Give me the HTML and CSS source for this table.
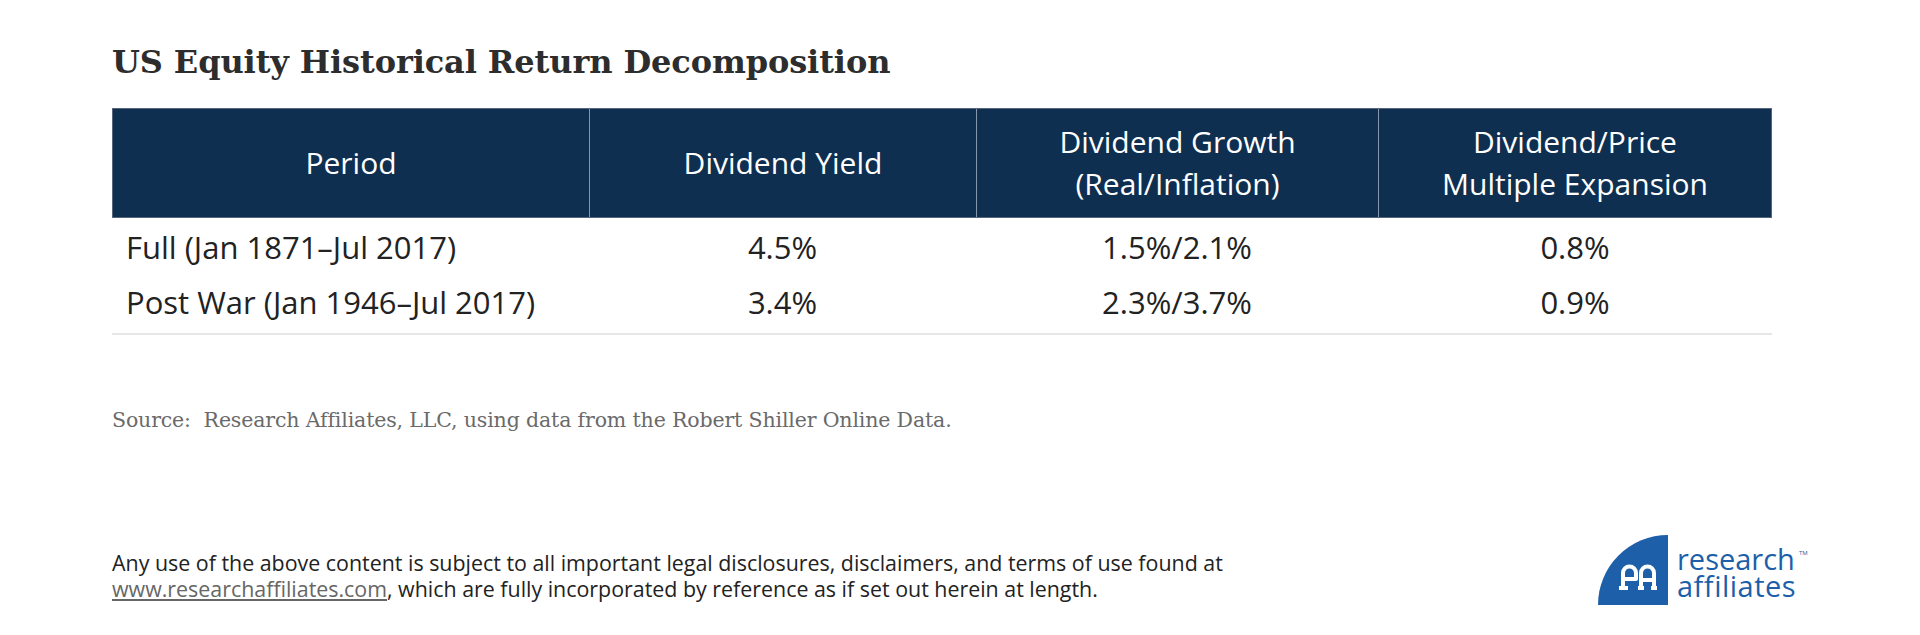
FILE: index.html
```html
<!DOCTYPE html>
<html lang="en">
<head>
<meta charset="utf-8">
<title>US Equity Historical Return Decomposition</title>
<link rel="stylesheet" href="styles.css">
</head>
<body>
<main class="page">
  <h1 class="title">US Equity Historical Return Decomposition</h1>
  <div class="table" role="table">
    <div class="thead" role="row">
      <div class="th" role="columnheader">Period</div>
      <div class="th" role="columnheader">Dividend Yield</div>
      <div class="th" role="columnheader">Dividend Growth<br>(Real/Inflation)</div>
      <div class="th" role="columnheader">Dividend/Price<br>Multiple Expansion</div>
    </div>
    <div class="tbody">
      <div class="tr" role="row">
        <div class="td first" role="cell">Full (Jan 1871–Jul 2017)</div>
        <div class="td" role="cell">4.5%</div>
        <div class="td" role="cell">1.5%/2.1%</div>
        <div class="td" role="cell">0.8%</div>
      </div>
      <div class="tr" role="row">
        <div class="td first" role="cell">Post War (Jan 1946–Jul 2017)</div>
        <div class="td" role="cell">3.4%</div>
        <div class="td" role="cell">2.3%/3.7%</div>
        <div class="td" role="cell">0.9%</div>
      </div>
    </div>
  </div>
  <p class="source">Source:&nbsp; Research Affiliates, LLC, using data from the Robert Shiller Online Data.</p>
</main>
<footer class="footer">
  <p class="disclaimer">Any use of the above content is subject to all important legal disclosures, disclaimers, and terms of use found at<br><a class="link" href="#">www.researchaffiliates.com</a>, which are fully incorporated by reference as if set out herein at length.</p>
  <div class="logo" aria-label="research affiliates">
    <svg class="logo-mark" width="70" height="72" viewBox="0 0 70 72" aria-hidden="true">
      <path d="M0 71 A70 70 0 0 1 70 1 L70 71 Z" fill="#1d5fa9"/>
      <g fill="none" stroke="#fff" stroke-width="4" stroke-linejoin="round">
        <path d="M25 54 L25 39 A6.5 6.5 0 0 1 38 39 L38 45 L27 45"/>
        <path d="M21 54 L30 54"/>
        <path d="M43 54 L43 39 A6.5 6.5 0 0 1 56 39 L56 54"/>
        <path d="M43 46 L56 46"/>
        <path d="M40 54 L46 54 M53 54 L59 54"/>
      </g>
    </svg>
    <div class="logo-words">
      <span class="logo-line">research<span class="tm">TM</span></span>
      <span class="logo-line wide">affiliates</span>
    </div>
  </div>
</footer>
</body>
</html>
```
FILE: styles.css
```css
html, body {
  margin: 0;
  padding: 0;
  background: #ffffff;
}

.page {
  padding: 0 112px;
}

.title {
  margin: 0;
  padding-top: 42px;
  font-family: "DejaVu Serif", "Liberation Serif", serif;
  font-weight: 700;
  font-size: 32px;
  line-height: 40px;
  letter-spacing: -0.1px;
  color: #2d2d2d;
}

.table {
  width: 1660px;
  margin-top: 26px;
  font-family: "Open Sans", "Noto Sans", sans-serif;
}

.thead {
  display: grid;
  grid-template-columns: 476px 387px 402px 393px;
  height: 110px;
  box-sizing: border-box;
  background: #0f2f51;
  border: 1px solid #56657d;
}

.th {
  display: flex;
  align-items: center;
  justify-content: center;
  text-align: center;
  color: #ffffff;
  font-size: 30px;
  line-height: 42px;
  font-weight: 400;
}

.th + .th {
  border-left: 1px solid #8796af;
}

.tbody {
  padding: 2px 0 3px;
  border-bottom: 2px solid #e6e6e6;
}

.tr {
  display: grid;
  grid-template-columns: 477px 387px 402px 394px;
  height: 55px;
}

.td {
  font-size: 31px;
  line-height: 55px;
  color: #222222;
  text-align: center;
}

.td.first {
  text-align: left;
  padding-left: 14px;
}

.source {
  margin: 71px 0 0;
  font-family: "DejaVu Serif", "Liberation Serif", serif;
  font-size: 20.5px;
  line-height: 28px;
  letter-spacing: -0.15px;
  color: #6a6a6a;
}

.footer {
  display: flex;
  justify-content: space-between;
  align-items: flex-start;
  padding: 0 110px 0 112px;
  margin-top: 100px;
}

.disclaimer {
  margin: 16px 0 0;
  font-family: "Open Sans", "Noto Sans", sans-serif;
  font-size: 21.4px;
  line-height: 26px;
  color: #222222;
}

.link {
  color: #666666;
  text-decoration: underline;
}

.logo {
  display: flex;
  align-items: flex-start;
  gap: 9px;
  width: 212px;
}

.logo-mark {
  display: block;
  flex: none;
}

.logo-words {
  display: flex;
  flex-direction: column;
  margin-top: 11px;
  font-family: "Open Sans", "Noto Sans", sans-serif;
  font-size: 29px;
  line-height: 27px;
  color: #1d5fa9;
}

.logo-line {
  display: block;
  white-space: nowrap;
}

.logo-line.wide {
  letter-spacing: 0.5px;
}

.tm {
  font-size: 6px;
  line-height: 0;
  vertical-align: 15px;
  margin-left: 4px;
}
```
